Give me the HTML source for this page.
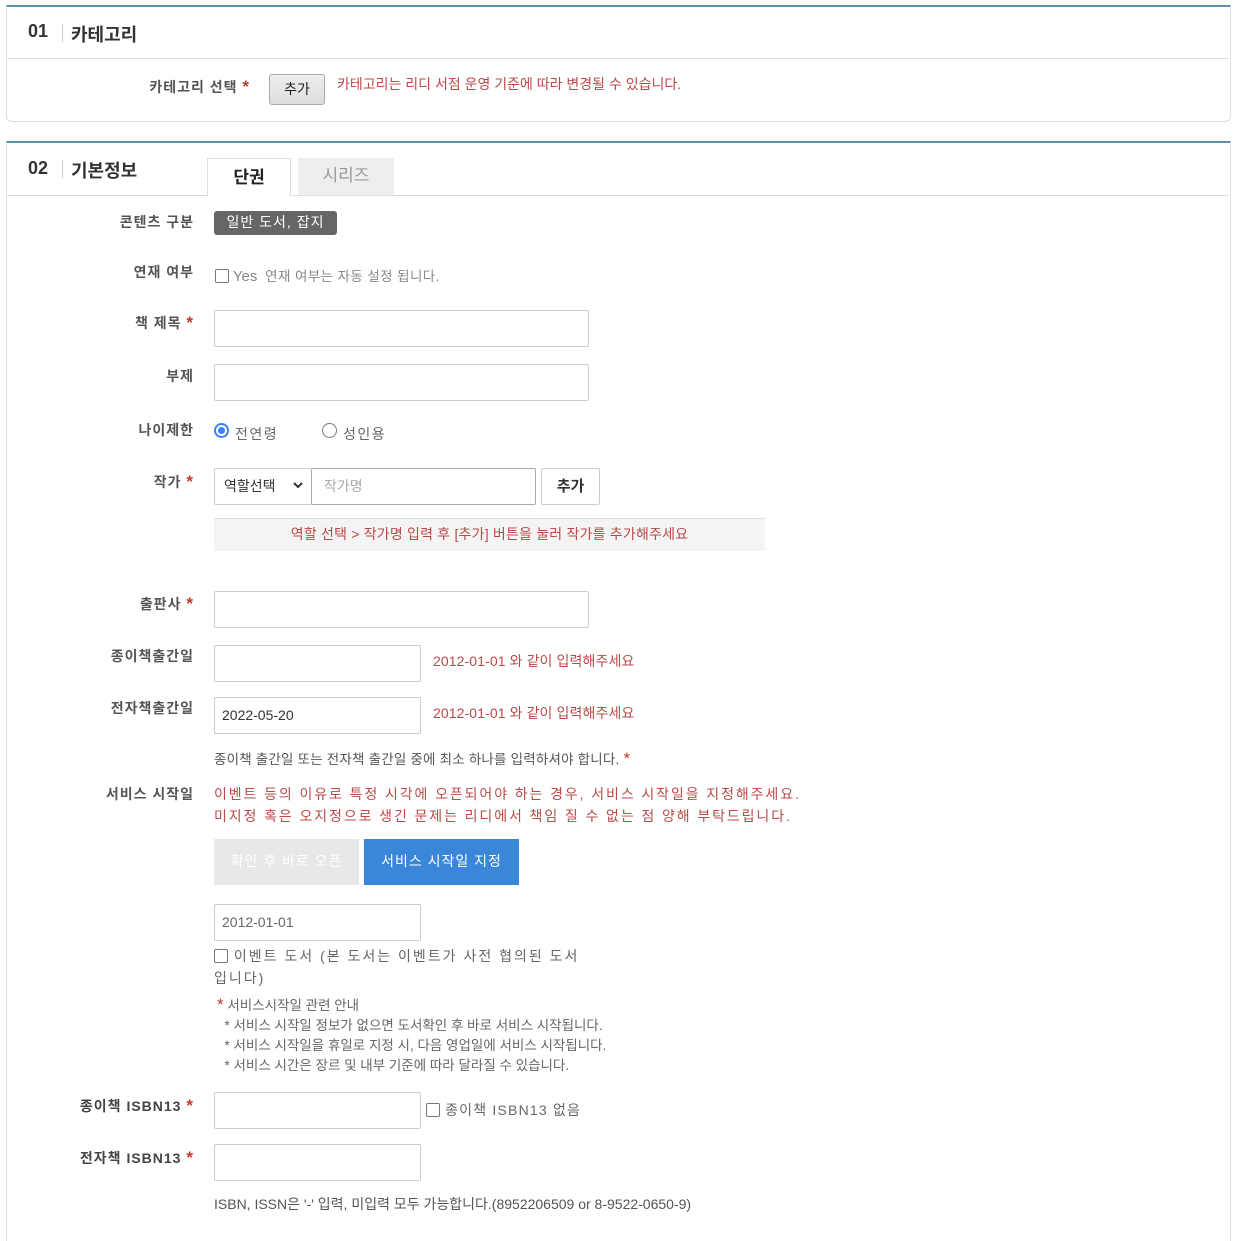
<!DOCTYPE html>
<html><head><meta charset="utf-8"><style>
*{box-sizing:border-box;margin:0;padding:0}
body{width:1234px;height:1223px;background:#fff;position:relative;overflow:hidden;font-family:"Liberation Sans","Noto Sans CJK KR",sans-serif;color:#444;font-size:14px}
.a{position:absolute;white-space:nowrap}
.box{position:absolute;border:1px solid #ddd;border-top:2px solid #5f8fb0}
.hl{position:absolute;left:7px;right:5px;height:1px;background:#ddd}
.lbl{position:absolute;right:1040px;text-align:right;font-weight:bold;color:#555;font-size:14px;white-space:nowrap;letter-spacing:1px}
.st{color:#c0392b;font-size:17px;line-height:10px}
.inp{position:absolute;border:1px solid #ccc;border-radius:2px;background:#fff;height:37px}
.red{color:#b94a48}
.h{font-size:18px;font-weight:bold;color:#333}
.sep{position:absolute;width:1px;height:18px;background:#ccc}
.cb{display:inline-block;width:14px;height:14px;border:1px solid #777;border-radius:2px;vertical-align:-2px}
</style></head><body>
<div class="box" style="left:6px;top:5px;width:1225px;height:117px;border-radius:0 0 6px 6px"></div>
<div class="hl" style="top:58px"></div>
<div class="a h" style="left:28px;top:21px">01</div><div class="sep" style="left:62px;top:24px"></div>
<div class="a h" style="left:71px;top:21px">카테고리</div>
<div class="lbl" style="top:77px;right:984px">카테고리 선택 <span class="st">*</span></div>
<div class="a" style="left:269px;top:74px;width:56px;height:31px;border:1px solid #aaa;border-radius:3px;background:linear-gradient(#eee,#ddd);text-align:center;line-height:29px;color:#222">추가</div>
<div class="a red" style="left:337px;top:74px;font-size:14px">카테고리는 리디 서점 운영 기준에 따라 변경될 수 있습니다.</div>

<div class="box" style="left:6px;top:141px;width:1225px;height:1100px;border-bottom:none"></div>
<div class="hl" style="top:195px"></div>
<div class="a h" style="left:28px;top:158px">02</div><div class="sep" style="left:62px;top:160px"></div>
<div class="a h" style="left:71px;top:157px">기본정보</div>
<div class="a" style="left:207px;top:158px;width:84px;height:38px;border:1px solid #ddd;border-bottom:none;background:#fff;text-align:center;line-height:38px;font-size:17px;font-weight:bold;color:#222">단권</div>
<div class="a" style="left:298px;top:158px;width:96px;height:37px;background:#eee;text-align:center;line-height:36px;font-size:17px;color:#999">시리즈</div>

<div class="lbl" style="top:212px">콘텐츠 구분</div>
<div class="a" style="left:214px;top:211px;width:123px;height:24px;background:#666;border-radius:3px;color:#fff;text-align:center;line-height:23px;font-size:14px;letter-spacing:1px">일반 도서, 잡지</div>

<div class="lbl" style="top:262px">연재 여부</div>
<div class="a" style="left:215px;top:265px;color:#888"><span class="cb"></span> <span style="font-size:15px">Yes</span> &nbsp;<span style="font-size:13.5px;letter-spacing:0.4px">연재 여부는 자동 설정 됩니다.</span></div>

<div class="lbl" style="top:313px">책 제목 <span class="st">*</span></div>
<div class="inp" style="left:214px;top:310px;width:375px"></div>
<div class="lbl" style="top:366px">부제</div>
<div class="inp" style="left:214px;top:364px;width:375px"></div>

<div class="lbl" style="top:420px">나이제한</div>
<div class="a" style="left:214px;top:423px;width:15px;height:15px;border-radius:50%;border:2px solid #3b82f6;background:#fff"><div style="position:absolute;left:2px;top:2px;width:7px;height:7px;border-radius:50%;background:#3b82f6"></div></div>
<div class="a" style="left:235px;top:424px;color:#666;letter-spacing:1.5px">전연령</div>
<div class="a" style="left:322px;top:423px;width:15px;height:15px;border-radius:50%;border:1px solid #777"></div>
<div class="a" style="left:343px;top:424px;color:#666;letter-spacing:1.5px">성인용</div>

<div class="lbl" style="top:472px">작가 <span class="st">*</span></div>
<div class="inp" style="left:214px;top:468px;width:98px;padding:0 9px;line-height:35px;color:#333">역할선택</div>
<svg class="a" style="left:292px;top:481px" width="12" height="10"><path d="M2 2l4 4 4-4" stroke="#333" stroke-width="2" fill="none"/></svg>
<div class="inp" style="left:311px;top:468px;width:225px;border-color:#aaa;padding-left:12px;line-height:35px;color:#aaa">작가명</div>
<div class="inp" style="left:541px;top:468px;width:59px;text-align:center;line-height:35px;font-weight:bold;color:#333;font-size:15px">추가</div>
<div class="a red" style="left:214px;top:518px;width:551px;height:33px;background:#f4f4f4;border-top:1px solid #ddd;text-align:center;line-height:31px;font-size:14px;letter-spacing:0.2px">역할 선택 &gt; 작가명 입력 후 [추가] 버튼을 눌러 작가를 추가해주세요</div>

<div class="lbl" style="top:594px">출판사 <span class="st">*</span></div>
<div class="inp" style="left:214px;top:591px;width:375px"></div>
<div class="lbl" style="top:646px">종이책출간일</div>
<div class="inp" style="left:214px;top:645px;width:207px"></div>
<div class="a red" style="left:433px;top:651px;font-size:14px;letter-spacing:0.1px">2012-01-01 와 같이 입력해주세요</div>
<div class="lbl" style="top:698px">전자책출간일</div>
<div class="inp" style="left:214px;top:697px;width:207px;padding-left:7px;line-height:35px;color:#333;font-size:14px">2022-05-20</div>
<div class="a red" style="left:433px;top:703px;font-size:14px;letter-spacing:0.1px">2012-01-01 와 같이 입력해주세요</div>
<div class="a" style="left:214px;top:748px;font-size:13.5px;color:#555;letter-spacing:0.2px">종이책 출간일 또는 전자책 출간일 중에 최소 하나를 입력하셔야 합니다. <span class="st">*</span></div>

<div class="lbl" style="top:784px">서비스 시작일</div>
<div class="a red" style="left:214px;top:784px;font-size:14px;letter-spacing:1.9px">이벤트 등의 이유로 특정 시각에 오픈되어야 하는 경우, 서비스 시작일을 지정해주세요.</div>
<div class="a red" style="left:214px;top:806px;font-size:14px;letter-spacing:1.9px">미지정 혹은 오지정으로 생긴 문제는 리디에서 책임 질 수 없는 점 양해 부탁드립니다.</div>
<div class="a" style="left:214px;top:839px;width:145px;height:46px;background:#e6e8ea;color:#fff;text-align:center;line-height:45px;letter-spacing:1px">확인 후 바로 오픈</div>
<div class="a" style="left:364px;top:839px;width:155px;height:46px;background:#3a87d9;color:#fff;text-align:center;line-height:45px;letter-spacing:1px">서비스 시작일 지정</div>
<div class="inp" style="left:214px;top:904px;width:207px;padding-left:7px;line-height:35px;color:#666">2012-01-01</div>
<div class="a" style="left:214px;top:946px;color:#666;letter-spacing:2px"><span class="cb"></span> 이벤트 도서 (본 도서는 이벤트가 사전 협의된 도서</div>
<div class="a" style="left:214px;top:968px;color:#666;letter-spacing:2px">입니다)</div>
<div class="a" style="left:217px;top:996px;font-size:13.5px;color:#666;line-height:20px"><span class="st">*</span> 서비스시작일 관련 안내<br>&nbsp; * 서비스 시작일 정보가 없으면 도서확인 후 바로 서비스 시작됩니다.<br>&nbsp; * 서비스 시작일을 휴일로 지정 시, 다음 영업일에 서비스 시작됩니다.<br>&nbsp; * 서비스 시간은 장르 및 내부 기준에 따라 달라질 수 있습니다.</div>

<div class="lbl" style="top:1096px;color:#444">종이책 ISBN13 <span class="st">*</span></div>
<div class="inp" style="left:214px;top:1092px;width:207px"></div>
<div class="a" style="left:426px;top:1100px;color:#666;letter-spacing:1.2px"><span class="cb"></span> 종이책 ISBN13 없음</div>
<div class="lbl" style="top:1148px;color:#444">전자책 ISBN13 <span class="st">*</span></div>
<div class="inp" style="left:214px;top:1144px;width:207px"></div>
<div class="a" style="left:214px;top:1194px;font-size:14px;color:#555;letter-spacing:0px">ISBN, ISSN은 '-' 입력, 미입력 모두 가능합니다.(8952206509 or 8-9522-0650-9)</div>
</body></html>
